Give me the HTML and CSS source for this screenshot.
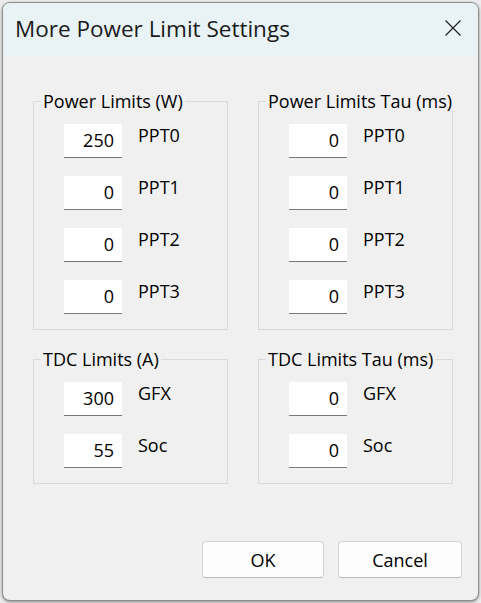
FILE: index.html
```html
<!DOCTYPE html>
<html lang="en">
<head>
<meta charset="utf-8">
<title>More Power Limit Settings</title>
<link rel="stylesheet" href="styles.css">
</head>
<body>
<div class="window">
  <div class="titlebar">
    <span class="title">More Power Limit Settings</span>
    <svg class="close" width="16" height="16" viewBox="0 0 16 16"><path d="M0.5 0.5 L15.5 15.5 M15.5 0.5 L0.5 15.5" stroke="#1b1b1b" stroke-width="1.1" fill="none"/></svg>
  </div>
  <div class="content">
    <div class="groups">
      <fieldset class="group">
        <legend>Power Limits (W)</legend>
        <div class="rows">
          <div class="row"><input class="num" type="text" value="250"><span class="lbl">PPT0</span></div>
          <div class="row"><input class="num" type="text" value="0"><span class="lbl">PPT1</span></div>
          <div class="row"><input class="num" type="text" value="0"><span class="lbl">PPT2</span></div>
          <div class="row"><input class="num" type="text" value="0"><span class="lbl">PPT3</span></div>
        </div>
      </fieldset>
      <fieldset class="group">
        <legend>Power Limits Tau (ms)</legend>
        <div class="rows">
          <div class="row"><input class="num" type="text" value="0"><span class="lbl">PPT0</span></div>
          <div class="row"><input class="num" type="text" value="0"><span class="lbl">PPT1</span></div>
          <div class="row"><input class="num" type="text" value="0"><span class="lbl">PPT2</span></div>
          <div class="row"><input class="num" type="text" value="0"><span class="lbl">PPT3</span></div>
        </div>
      </fieldset>
      <fieldset class="group">
        <legend>TDC Limits (A)</legend>
        <div class="rows">
          <div class="row"><input class="num" type="text" value="300"><span class="lbl">GFX</span></div>
          <div class="row"><input class="num" type="text" value="55"><span class="lbl">Soc</span></div>
        </div>
      </fieldset>
      <fieldset class="group">
        <legend>TDC Limits Tau (ms)</legend>
        <div class="rows">
          <div class="row"><input class="num" type="text" value="0"><span class="lbl">GFX</span></div>
          <div class="row"><input class="num" type="text" value="0"><span class="lbl">Soc</span></div>
        </div>
      </fieldset>
    </div>
    <div class="buttons">
      <button class="btn btn-ok" type="button">OK</button>
      <button class="btn btn-cancel" type="button">Cancel</button>
    </div>
  </div>
</div>
</body>
</html>
```

FILE: styles.css
```css
html, body {
  margin: 0;
  padding: 0;
}
body {
  width: 481px;
  height: 603px;
  overflow: hidden;
  background: #ececec;
  font-family: "Open Sans", "Noto Sans", sans-serif;
  color: #000;
}
.window {
  box-sizing: border-box;
  margin: 2px 0 0 2px;
  width: 477px;
  height: 599px;
  border: 1px solid #8e8e8e;
  border-radius: 8px;
  background: #f0f0f0;
  overflow: hidden;
  box-shadow: 0 1px 3px rgba(0, 0, 0, 0.45);
}
.titlebar {
  box-sizing: border-box;
  height: 54px;
  padding: 12px 17px 0 12px;
  background: #e9f3f6;
  display: flex;
  justify-content: space-between;
  align-items: flex-start;
}
.title {
  font-size: 22.5px;
  line-height: 28px;
  color: #1a1a1a;
  white-space: nowrap;
}
.close {
  margin-top: 5px;
  display: block;
}
.content {
  padding: 34px 25px 0 30px;
}
.groups {
  display: grid;
  grid-template-columns: 195px 195px;
  column-gap: 30px;
  row-gap: 19px;
  align-items: start;
}
.group {
  margin: 0;
  padding: 0;
  border: 1px solid #dadada;
  min-width: 0;
}
.group legend {
  font-size: 18px;
  line-height: 20px;
  padding: 0 2px;
  margin-left: 7px;
  white-space: nowrap;
}
.rows {
  display: flex;
  flex-direction: column;
  gap: 18px;
  padding: 13px 0 15px 30px;
}
.row {
  display: flex;
  align-items: flex-start;
}
.num {
  box-sizing: border-box;
  width: 58px;
  height: 34px;
  margin: 0;
  padding: 0 8px 2px 0;
  border: 0;
  border-bottom: 1px solid #7a7a7a;
  background: #fff;
  text-align: right;
  font-family: "Open Sans", "Noto Sans", sans-serif;
  font-size: 18px;
  color: #000;
  outline: none;
}
.lbl {
  margin-left: 16px;
  margin-top: 1px;
  font-size: 18px;
  line-height: 20px;
}
.buttons {
  display: flex;
  justify-content: flex-end;
  gap: 14px;
  margin-top: 57px;
  margin-right: -9px;
}
.btn {
  box-sizing: border-box;
  height: 37px;
  margin: 0;
  padding: 0;
  border: 1px solid #d3d3d3;
  border-bottom-color: #bcbcbc;
  border-radius: 4px;
  background: #fdfdfd;
  font-family: "Open Sans", "Noto Sans", sans-serif;
  font-size: 18px;
  color: #000;
}
.btn-ok {
  width: 122px;
}
.btn-cancel {
  width: 124px;
}
```
